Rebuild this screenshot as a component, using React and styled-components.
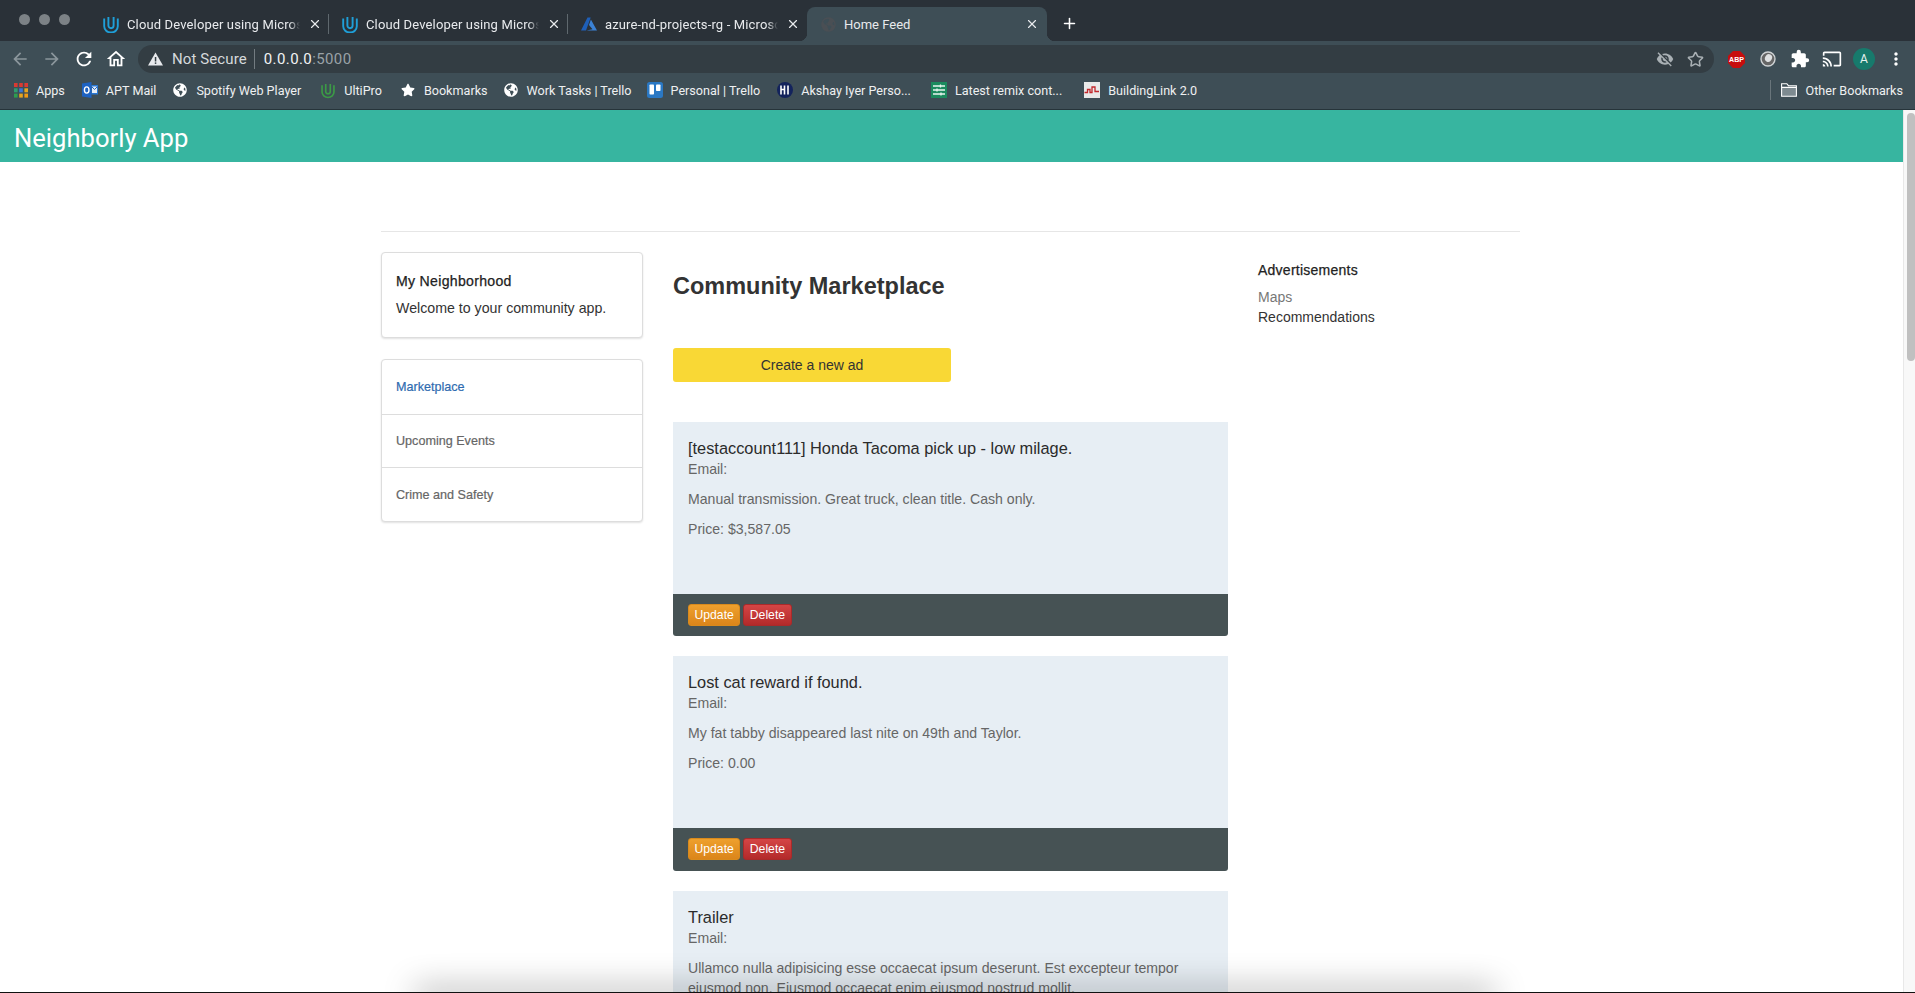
import React from "react";
import styled, { createGlobalStyle } from "styled-components";
import { X, Plus, Star } from "lucide-react";
import { FaGlobeAmericas, FaStar } from "react-icons/fa";
import {
  MdArrowBack,
  MdArrowForward,
  MdRefresh,
  MdOutlineHome,
  MdVisibilityOff,
  MdExtension,
  MdCast,
  MdMoreVert,
} from "react-icons/md";

const GlobalStyle = createGlobalStyle`
  html, body {
    margin: 0;
    padding: 0;
    background: #fff;
    overflow: hidden;
  }
  * { box-sizing: border-box; }
`;

const chromeFont = `Roboto, "Liberation Sans", sans-serif`;
const pageFont = `"Liberation Sans", Arial, sans-serif`;

const Window = styled.div`
  position: relative;
  height: 100vh;
  overflow: hidden;
  display: flex;
  flex-direction: column;
  font-family: ${pageFont};
  border-bottom: 1px solid #111;
`;

/* browser chrome */
const TabStrip = styled.div`
  height: 41px;
  flex: none;
  background: #2a3138;
  display: flex;
  align-items: flex-start;
  font-family: ${chromeFont};
  color: #e8eaed;
`;
const Lights = styled.div`
  display: flex;
  gap: 9px;
  padding: 14px 0 0 19px;
  width: 90px;
  flex: none;
`;
const Light = styled.span`
  width: 11px;
  height: 11px;
  border-radius: 50%;
  background: #7c8286;
`;
const Tab = styled.div`
  position: relative;
  width: ${(p) => (p.$active ? "240px" : "239px")};
  height: ${(p) => (p.$active ? "34px" : "41px")};
  margin-top: ${(p) => (p.$active ? "7px" : "0")};
  padding: ${(p) => (p.$active ? "0 8px 0 13px" : "7px 7px 0 13px")};
  flex: none;
  display: flex;
  align-items: center;
  gap: 8px;
  font-size: 13px;
  background: ${(p) => (p.$active ? "#3e4e56" : "transparent")};
  border-radius: 8px 8px 0 0;
  ${(p) =>
    p.$active &&
    `
    &::before, &::after {
      content: "";
      position: absolute;
      bottom: 0;
      width: 8px;
      height: 8px;
    }
    &::before { left: -8px; background: radial-gradient(circle at 0 0, transparent 8px, #3e4e56 8.5px); }
    &::after { right: -8px; background: radial-gradient(circle at 100% 0, transparent 8px, #3e4e56 8.5px); }
  `}
`;
const TabIcon = styled.span`
  width: 16px;
  height: 18px;
  flex: none;
  display: flex;
  align-items: center;
  justify-content: center;
`;
const TabTitle = styled.span`
  flex: 1;
  min-width: 0;
  white-space: nowrap;
  letter-spacing: ${(p) => (p.$active ? "0" : "0.14px")};
  -webkit-mask-image: ${(p) =>
    p.$active ? "none" : "linear-gradient(90deg, #000 94%, transparent 100%)"};
  mask-image: ${(p) =>
    p.$active ? "none" : "linear-gradient(90deg, #000 94%, transparent 100%)"};
`;
const TabDivider = styled.span`
  width: 1px;
  height: 20px;
  margin: 14px 0 0 -1px;
  flex: none;
  background: #5f686e;
`;
const NewTab = styled.span`
  margin: 15px 0 0 14px;
  display: flex;
  color: #fff;
`;

const Toolbar = styled.div`
  height: 32px;
  flex: none;
  background: #3e4e56;
  display: flex;
  align-items: flex-end;
  font-family: ${chromeFont};
  color: #fff;
`;
const NavButtons = styled.div`
  width: 138px;
  height: 28px;
  flex: none;
  display: flex;
  align-items: center;
  padding-left: 9px;
  gap: 10px;
`;
const NavIcon = styled.span`
  width: 22px;
  display: flex;
  justify-content: center;
  color: ${(p) => (p.$dim ? "#8b969c" : "#fff")};
`;
const AddressBar = styled.div`
  width: 1576px;
  height: 28px;
  flex: none;
  border-radius: 14px;
  background: #333d43;
  display: flex;
  align-items: center;
  padding: 0 10px 0 10px;
  font-size: 15px;
`;
const SecureLabel = styled.span`
  margin-left: 9px;
  color: #d6d9db;
  letter-spacing: 0.1px;
`;
const AddressDivider = styled.span`
  width: 1px;
  height: 20px;
  background: #737c81;
  margin: 0 9px 0 7px;
`;
const Host = styled.span`
  color: #f1f3f4;
  letter-spacing: 0.4px;
`;
const Port = styled.span`
  color: #9aa2a7;
  letter-spacing: 0.4px;
`;
const AddressEnd = styled.div`
  margin-left: auto;
  display: flex;
  align-items: center;
  gap: 13px;
  color: #a9b0b4;
`;
const Extensions = styled.div`
  flex: 1;
  height: 28px;
  display: flex;
  align-items: center;
  padding-left: 12px;
  gap: 12px;
`;
const ExtSlot = styled.span`
  width: 20px;
  height: 22px;
  flex: none;
  display: flex;
  align-items: center;
  justify-content: center;
`;
const Avatar = styled.span`
  width: 22px;
  height: 22px;
  margin: 0 -1px;
  border-radius: 50%;
  background: #177a6c;
  display: flex;
  align-items: center;
  justify-content: center;
  font-size: 12px;
  color: #e6f3f0;
  flex: none;
`;

const BookmarksBar = styled.div`
  height: 37px;
  flex: none;
  background: #3e4e56;
  border-bottom: 1px solid #26343a;
  display: flex;
  align-items: center;
  padding: 0 12px 2px 13px;
  font-family: ${chromeFont};
  font-size: 12.6px;
  color: #eef0f1;
`;
const Bookmark = styled.span`
  display: flex;
  align-items: center;
  gap: ${(p) => p.$gap || 8}px;
  margin-right: ${(p) => p.$after || 17}px;
  white-space: nowrap;
`;
const BookmarkIcon = styled.span`
  width: 16px;
  height: 16px;
  flex: none;
  display: flex;
  align-items: center;
  justify-content: center;
`;
const OtherBookmarks = styled.span`
  margin-left: auto;
  display: flex;
  align-items: center;
  gap: 9px;
  padding-left: 10px;
  height: 20px;
  border-left: 1px solid #69757b;
`;

/* the page itself */
const PageArea = styled.div`
  flex: 1;
  min-height: 0;
  display: flex;
`;
const Content = styled.div`
  flex: 1;
  min-width: 0;
  overflow: hidden;
`;
const ScrollTrack = styled.div`
  width: 12px;
  flex: none;
  background: #f8f8f8;
  border-left: 1px solid #e8e8e8;
  padding: 3px 0 0 3px;
`;
const ScrollThumb = styled.div`
  height: 248px;
  border-radius: 4px;
  background: #c0c0c0;
`;
const AppBar = styled.header`
  height: 52px;
  background: #37b5a0;
  display: flex;
  align-items: center;
  padding: 3px 0 0 14px;
  font-family: Roboto, "Noto Sans", sans-serif;
  font-size: 25.6px;
  color: #fff;
`;
const Container = styled.div`
  width: 1139px;
  margin-left: 381px;
  padding-top: 69px;
`;
const Rule = styled.hr`
  margin: 0 0 20px;
  border: 0;
  border-top: 1px solid #e6e6e6;
`;
const Columns = styled.div`
  display: grid;
  grid-template-columns: 262px 555px 262px;
  column-gap: 30px;
`;
const SideColumn = styled.aside`
  display: flex;
  flex-direction: column;
  gap: 21px;
`;
const Panel = styled.div`
  background: #fff;
  border: 1px solid #ddd;
  border-radius: 4px;
  box-shadow: 0 1px 2px rgba(0, 0, 0, 0.12);
`;
const WelcomePanel = styled(Panel)`
  height: 86px;
  padding: 18px 14px 0;
  font-size: 14.2px;
  line-height: 20px;
  color: #333;
`;
const PanelTitle = styled.div`
  font-size: 14.1px;
  color: #222;
  -webkit-text-stroke: 0.25px #222;
  letter-spacing: 0.3px;
  margin-bottom: 7px;
`;
const NavRow = styled.div`
  height: 53.7px;
  padding-left: 14px;
  display: flex;
  align-items: center;
  font-size: 12.6px;
  color: ${(p) => (p.$active ? "#2f6bb0" : "#666")};
  -webkit-text-stroke: 0.2px ${(p) => (p.$active ? "#2f6bb0" : "#666")};
  & + & {
    border-top: 1px solid #ddd;
  }
`;
const MainColumn = styled.main`
  min-width: 0;
`;
const PageTitle = styled.h1`
  margin: 19px 0 0;
  font-size: 23.5px;
  line-height: 30px;
  font-weight: 700;
  color: #333;
`;
const CreateButton = styled.button`
  display: block;
  margin: 47px 0 40px;
  width: 278px;
  height: 34px;
  border: 0;
  border-radius: 3px;
  background: #f9d835;
  font-family: ${pageFont};
  font-size: 14px;
  color: #333;
`;
const AdCard = styled.article`
  margin-bottom: 20px;
  border-radius: 0 0 3px 3px;
  overflow: hidden;
`;
const AdBody = styled.div`
  height: 172px;
  padding: 15px 15px 0;
  background: #e7eef4;
  font-size: 14.1px;
  line-height: 20px;
  color: #666;
`;
const AdTitle = styled.div`
  font-size: 16.35px;
  line-height: 22px;
  color: #2b2b2b;
`;
const AdLine = styled.p`
  margin: 0 0 10px;
`;
const AdFooter = styled.div`
  height: 42.25px;
  background: #465254;
  display: flex;
  align-items: center;
  padding-left: 15px;
  gap: 3px;
`;
const ActionButton = styled.button`
  height: 22px;
  padding: 0 5.5px;
  border-radius: 3px;
  font-family: ${pageFont};
  font-size: 12.2px;
  color: #fff;
  border: 1px solid ${(p) => (p.$danger ? "#a92a2a" : "#d98a1c")};
  background: ${(p) =>
    p.$danger
      ? "linear-gradient(#d44545, #b32a2a)"
      : "linear-gradient(#eea02d, #db851a)"};
`;
const AdsTitle = styled.div`
  margin: 8px 0 7px;
  font-size: 14px;
  line-height: 20px;
  color: #222;
  letter-spacing: 0.25px;
  -webkit-text-stroke: 0.25px #222;
`;
const AdsLink = styled.div`
  font-size: 14px;
  line-height: 20px;
  color: ${(p) => (p.$muted ? "#777" : "#333")};
`;
const BottomShade = styled.div`
  position: absolute;
  left: 415px;
  width: 1080px;
  bottom: -12px;
  height: 12px;
  pointer-events: none;
  box-shadow: 0 -3px 32px 0 rgba(0, 0, 0, 0.42);
`;

const UdacityIcon = ({ color = "#1f9fd8", width = 16, height = 17 }) => (
  <svg width={width} height={height} viewBox="0 0 16 17" fill="none">
    <path d="M1.2 2.5v7.8a6.8 6.2 0 0 0 13.6 0V2.5" stroke={color} strokeWidth="1.9" />
    <path d="M5.4 1v8.6a2.6 2.6 0 0 0 5.2 0V1" stroke={color} strokeWidth="1.9" />
  </svg>
);

const AzureIcon = () => (
  <svg width="16" height="14" viewBox="0 0 16 14">
    <path d="M6.5 0.5h3.2L5 13.5H0z" fill="#1e5fb8" />
    <path d="M9.9 2.5L16 13.5H5.5l6-1.2L8 8z" fill="#3b82d6" />
  </svg>
);

const AppsIcon = () => (
  <svg width="14" height="15" viewBox="0 0 14 15">
    {["#d93a32", "#d93a32", "#d93a32", "#2e9e6e", "#3b78d8", "#e6a520", "#2e9e4e", "#e6a520", "#f09a14"].map(
      (c, i) => (
        <rect key={i} x={(i % 3) * 5.2} y={Math.floor(i / 3) * 5.3} width="3.6" height="4" fill={c} />
      )
    )}
  </svg>
);

const OutlookIcon = () => (
  <svg width="16" height="16" viewBox="0 0 16 16">
    <path d="M0 1.5L9.5 0v16L0 14.5z" fill="#1d62c2" />
    <rect x="9.5" y="3" width="6.5" height="9.5" fill="#2a78d4" />
    <path d="M10 4.5h5v6.5h-5z" fill="#e8eef6" />
    <path d="M10 5l2.6 2.5L15 5" stroke="#1d62c2" strokeWidth="1" fill="none" />
    <ellipse cx="4.7" cy="8" rx="2.3" ry="3.1" fill="none" stroke="#fff" strokeWidth="1.4" />
  </svg>
);

const TrelloIcon = () => (
  <svg width="16" height="16" viewBox="0 0 16 16">
    <rect width="16" height="16" rx="2.5" fill="#2a78c4" />
    <rect x="2.5" y="2.5" width="4.5" height="10" rx="0.8" fill="#fff" />
    <rect x="9" y="2.5" width="4.5" height="6.5" rx="0.8" fill="#fff" />
  </svg>
);

const AkshayIcon = () => (
  <svg width="16" height="16" viewBox="0 0 16 16">
    <circle cx="8" cy="8" r="8" fill="#13235c" />
    <path d="M4 3.5v9M7.5 3.5v9M4 7.5h3.5M11 3.5v9" stroke="#fff" strokeWidth="1.6" />
  </svg>
);

const RemixIcon = () => (
  <svg width="16" height="16" viewBox="0 0 16 16">
    <rect width="16" height="16" fill="#1c8a5e" />
    <path d="M2 4h12M2 8h12M2 12h12" stroke="#e9f5ef" strokeWidth="1.3" />
    <path d="M9.5 2.5v3M6 6.5v3M10 10.5v3" stroke="#e9f5ef" strokeWidth="1.3" />
  </svg>
);

const BuildingLinkIcon = () => (
  <svg width="16" height="16" viewBox="0 0 16 16">
    <rect width="16" height="16" fill="#e9e9e9" />
    <path d="M0.5 10.5h3V7.5h2.5v3h2V5h3v4.5h4" stroke="#c3282c" strokeWidth="1.3" fill="none" />
  </svg>
);

const WarningIcon = () => (
  <svg width="15" height="14" viewBox="0 0 15 14">
    <path d="M7.5 0.5L15 13.5H0z" fill="#e8eaed" />
    <rect x="6.8" y="5" width="1.5" height="4.5" fill="#333d43" />
    <rect x="6.8" y="10.4" width="1.5" height="1.5" fill="#333d43" />
  </svg>
);

const FolderIcon = () => (
  <svg width="16" height="14" viewBox="0 0 16 14">
    <path d="M1 4.2h14.2v9H0.8z" fill="#7d8a90" />
    <path d="M0.6 13.3V0.7h5.2l1.6 2h8v10.6zM0.6 4.4h14.8" fill="none" stroke="#fff" strokeWidth="1.1" />
  </svg>
);

const AbpIcon = () => (
  <svg width="17" height="17" viewBox="0 0 18 18">
    <path d="M5.3 0h7.4L18 5.3v7.4L12.7 18H5.3L0 12.7V5.3z" fill="#c70d0d" />
    <text x="9" y="12" textAnchor="middle" fontSize="7.5" fontWeight="700" fontFamily={pageFont} fill="#fff">
      ABP
    </text>
  </svg>
);

const RecorderIcon = () => (
  <svg width="16" height="16" viewBox="0 0 16 16">
    <circle cx="8" cy="8" r="7" fill="#666" stroke="#cfd3d5" strokeWidth="1.4" />
    <ellipse cx="8.5" cy="7" rx="3.4" ry="4" fill="#dfe1e2" transform="rotate(30 8.5 7)" />
  </svg>
);

const tabs = [
  { title: "Cloud Developer using Microso", icon: <UdacityIcon /> },
  { title: "Cloud Developer using Microso", icon: <UdacityIcon /> },
  { title: "azure-nd-projects-rg - Microso", icon: <AzureIcon /> },
];

const bookmarks = [
  { label: "Apps", icon: <AppsIcon />, gap: 7, after: 17 },
  { label: "APT Mail", icon: <OutlookIcon />, after: 16 },
  { label: "Spotify Web Player", icon: <FaGlobeAmericas size={14} color="#fff" />, after: 19 },
  { label: "UltiPro", icon: <UdacityIcon color="#3c9a46" width={14} height={17} />, after: 18 },
  { label: "Bookmarks", icon: <FaStar size={14} color="#fff" />, after: 15 },
  { label: "Work Tasks | Trello", icon: <FaGlobeAmericas size={14} color="#fff" />, after: 15 },
  { label: "Personal | Trello", icon: <TrelloIcon /> },
  { label: "Akshay Iyer Perso...", icon: <AkshayIcon />, after: 20 },
  { label: "Latest remix cont...", icon: <RemixIcon />, after: 22 },
  { label: "BuildingLink 2.0", icon: <BuildingLinkIcon /> },
];

const ads = [
  {
    title: "[testaccount111] Honda Tacoma pick up - low milage.",
    text: "Manual transmission. Great truck, clean title. Cash only.",
    price: "Price: $3,587.05",
    actions: true,
  },
  {
    title: "Lost cat reward if found.",
    text: "My fat tabby disappeared last nite on 49th and Taylor.",
    price: "Price: 0.00",
    actions: true,
  },
  {
    title: "Trailer",
    text: "Ullamco nulla adipisicing esse occaecat ipsum deserunt. Est excepteur tempor eiusmod non. Eiusmod occaecat enim eiusmod nostrud mollit.",
  },
];

export default function App() {
  return (
    <Window>
      <GlobalStyle />
      <TabStrip>
        <Lights>
          <Light />
          <Light />
          <Light />
        </Lights>
        {tabs.map((tab, i) => (
          <React.Fragment key={i}>
            <Tab>
              <TabIcon>{tab.icon}</TabIcon>
              <TabTitle>{tab.title}</TabTitle>
              <X size={14} color="#e8eaed" />
            </Tab>
            {i < 2 && <TabDivider />}
          </React.Fragment>
        ))}
        <Tab $active>
          <TabIcon>
            <FaGlobeAmericas size={15} color="#4a4f54" />
          </TabIcon>
          <TabTitle $active>Home Feed</TabTitle>
          <X size={14} color="#e8eaed" />
        </Tab>
        <NewTab>
          <Plus size={17} strokeWidth={2.2} />
        </NewTab>
      </TabStrip>

      <Toolbar>
        <NavButtons>
          <NavIcon $dim>
            <MdArrowBack size={20} />
          </NavIcon>
          <NavIcon $dim>
            <MdArrowForward size={20} />
          </NavIcon>
          <NavIcon>
            <MdRefresh size={22} />
          </NavIcon>
          <NavIcon>
            <MdOutlineHome size={24} />
          </NavIcon>
        </NavButtons>
        <AddressBar>
          <WarningIcon />
          <SecureLabel>Not Secure</SecureLabel>
          <AddressDivider />
          <Host>0.0.0.0</Host>
          <Port>:5000</Port>
          <AddressEnd>
            <MdVisibilityOff size={18} />
            <Star size={17} strokeWidth={2.2} />
          </AddressEnd>
        </AddressBar>
        <Extensions>
          <ExtSlot>
            <AbpIcon />
          </ExtSlot>
          <ExtSlot>
            <RecorderIcon />
          </ExtSlot>
          <ExtSlot>
            <MdExtension size={20} color="#fff" />
          </ExtSlot>
          <ExtSlot>
            <MdCast size={20} />
          </ExtSlot>
          <Avatar>A</Avatar>
          <ExtSlot>
            <MdMoreVert size={20} />
          </ExtSlot>
        </Extensions>
      </Toolbar>

      <BookmarksBar>
        {bookmarks.map((b) => (
          <Bookmark key={b.label} $gap={b.gap} $after={b.after}>
            <BookmarkIcon>{b.icon}</BookmarkIcon>
            {b.label}
          </Bookmark>
        ))}
        <OtherBookmarks>
          <FolderIcon />
          Other Bookmarks
        </OtherBookmarks>
      </BookmarksBar>

      <PageArea>
        <Content>
          <AppBar>Neighborly App</AppBar>
          <Container>
            <Rule />
            <Columns>
              <SideColumn>
                <WelcomePanel>
                  <PanelTitle>My Neighborhood</PanelTitle>
                  Welcome to your community app.
                </WelcomePanel>
                <Panel>
                  <NavRow $active>Marketplace</NavRow>
                  <NavRow>Upcoming Events</NavRow>
                  <NavRow>Crime and Safety</NavRow>
                </Panel>
              </SideColumn>
              <MainColumn>
                <PageTitle>Community Marketplace</PageTitle>
                <CreateButton>Create a new ad</CreateButton>
                {ads.map((ad) => (
                  <AdCard key={ad.title}>
                    <AdBody>
                      <AdTitle>{ad.title}</AdTitle>
                      <AdLine>Email:</AdLine>
                      <AdLine>{ad.text}</AdLine>
                      {ad.price && <AdLine>{ad.price}</AdLine>}
                    </AdBody>
                    {ad.actions && (
                      <AdFooter>
                        <ActionButton>Update</ActionButton>
                        <ActionButton $danger>Delete</ActionButton>
                      </AdFooter>
                    )}
                  </AdCard>
                ))}
              </MainColumn>
              <aside>
                <AdsTitle>Advertisements</AdsTitle>
                <AdsLink $muted>Maps</AdsLink>
                <AdsLink>Recommendations</AdsLink>
              </aside>
            </Columns>
          </Container>
        </Content>
        <ScrollTrack>
          <ScrollThumb />
        </ScrollTrack>
      </PageArea>
      <BottomShade />
    </Window>
  );
}
